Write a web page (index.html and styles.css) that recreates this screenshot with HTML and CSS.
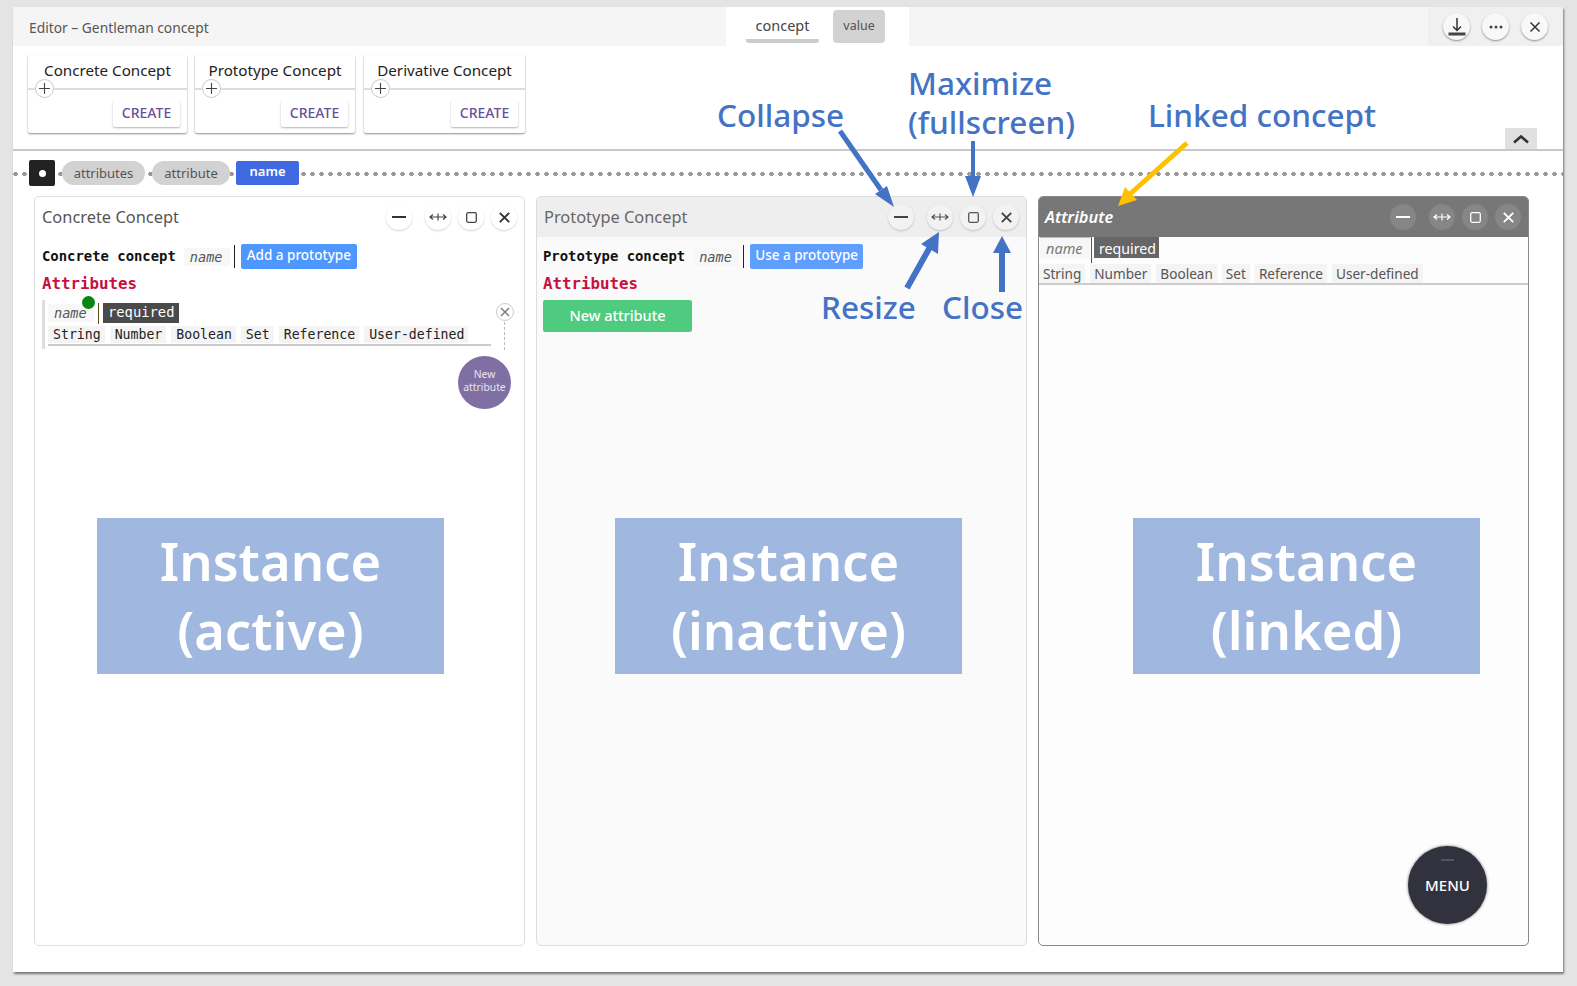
FILE: index.html

```html
<!DOCTYPE html>
<html lang="en">
<head>
  <meta charset="UTF-8">
  <title>Editor – Gentleman concept</title>
  <link rel="stylesheet" href="styles.css">
</head>
<body>

<div class="window">
  <header class="titlebar">
    <div class="title">Editor – Gentleman concept</div>
    <div class="tabs">
      <span class="tab tab-active">concept</span>
      <span class="tab tab-value">value</span>
    </div>
    <div class="win-actions">
      <button class="round"><svg width="20" height="22" viewBox="0 0 20 22"><path d="M10 2v12M6 10.500l4 4 4-4" fill="none" stroke="#333" stroke-width="1.500"/><rect x="1.500" y="16.500" width="17" height="3" fill="#444"/></svg></button>
      <button class="round"><svg width="14" height="4" viewBox="0 0 14 4"><circle cx="2" cy="2" r="1.500" fill="#444"/><circle cx="7" cy="2" r="1.500" fill="#444"/><circle cx="12" cy="2" r="1.500" fill="#444"/></svg></button>
      <button class="round"><svg width="12" height="12" viewBox="0 0 12 12"><path d="M1.500 1.500l9 9M10.500 1.500l-9 9" stroke="#333" stroke-width="1.500"/></svg></button>
    </div>
  </header>

  <section class="toolbar">
    <div class="card card-a">
      <div class="card-name">Concrete Concept</div>
      <span class="card-plus"><svg width="11" height="11" viewBox="0 0 11 11"><path d="M5.500 0v11M0 5.500h11" stroke="#444" stroke-width="1.100"/></svg></span>
      <div class="card-foot"><span class="create">CREATE</span></div>
    </div>
    <div class="card card-b">
      <div class="card-name">Prototype Concept</div>
      <span class="card-plus"><svg width="11" height="11" viewBox="0 0 11 11"><path d="M5.500 0v11M0 5.500h11" stroke="#444" stroke-width="1.100"/></svg></span>
      <div class="card-foot"><span class="create">CREATE</span></div>
    </div>
    <div class="card card-c">
      <div class="card-name">Derivative Concept</div>
      <span class="card-plus"><svg width="11" height="11" viewBox="0 0 11 11"><path d="M5.500 0v11M0 5.500h11" stroke="#444" stroke-width="1.100"/></svg></span>
      <div class="card-foot"><span class="create">CREATE</span></div>
    </div>
    <button class="fold"><svg width="18" height="10" viewBox="0 0 18 10"><path d="M2 8.500l7-6 7 6" fill="none" stroke="#333" stroke-width="2.600"/></svg></button>
  </section>

  <section class="workspace">
    <nav class="crumbs">
      <span class="crumb-root"><i></i></span>
      <span class="crumb">attributes</span>
      <span class="crumb crumb-b">attribute</span>
      <span class="crumb-current">name</span>
    </nav>

    <div class="panels">
      <article class="panel">
        <div class="panel-head">
          <h3>Concrete Concept</h3>
          <div class="panel-btns">
            <button class="round btn-min"><svg width="14" height="2" viewBox="0 0 14 2"><rect width="14" height="2" fill="#333"/></svg></button>
            <button class="round btn-resize"><svg width="18" height="10" viewBox="0 0 18 10"><path d="M1 5h16M4 2.500L1 5l3 2.500M14 2.500L17 5l-3 2.500M9 1.500v7" fill="none" stroke="#444" stroke-width="1.200"/></svg></button>
            <button class="round"><svg width="11" height="11" viewBox="0 0 11 11"><rect x=".7" y=".7" width="9.600" height="9.600" rx="1.500" fill="none" stroke="#444" stroke-width="1.300"/></svg></button>
            <button class="round"><svg width="11" height="11" viewBox="0 0 11 11"><path d="M.8.800l9.400 9.400M10.200.800L.8 10.200" stroke="#333" stroke-width="1.900"/></svg></button>
          </div>
        </div>
        <div class="panel-body">
          <div class="line">
            <b class="kw">Concrete concept</b>
            <span class="field">name</span>
            <span class="caret"></span>
            <span class="action">Add a prototype</span>
          </div>
          <div class="section-title">Attributes</div>
          <div class="attr">
            <div class="attr-top">
              <span class="field field-dot">name<i class="dot"></i></span>
              <span class="caret caret-sm"></span>
              <span class="req">required</span>
            </div>
            <div class="types">
              <span>String</span><span>Number</span><span>Boolean</span><span>Set</span><span>Reference</span><span>User-defined</span>
            </div>
            <span class="attr-x"><svg width="10" height="10" viewBox="0 0 10 10"><path d="M1 1l8 8M9 1l-8 8" stroke="#777" stroke-width="1.400"/></svg></span>
          </div>
          <div class="new-wrap"><span class="new-round">New attribute</span></div>
        </div>
      </article>

      <article class="panel panel-inactive">
        <div class="panel-head">
          <h3>Prototype Concept</h3>
          <div class="panel-btns">
            <button class="round btn-min"><svg width="14" height="2" viewBox="0 0 14 2"><rect width="14" height="2" fill="#444"/></svg></button>
            <button class="round btn-resize"><svg width="18" height="10" viewBox="0 0 18 10"><path d="M1 5h16M4 2.500L1 5l3 2.500M14 2.500L17 5l-3 2.500M9 1.500v7" fill="none" stroke="#555" stroke-width="1.200"/></svg></button>
            <button class="round"><svg width="11" height="11" viewBox="0 0 11 11"><rect x=".7" y=".7" width="9.600" height="9.600" rx="1.500" fill="none" stroke="#555" stroke-width="1.300"/></svg></button>
            <button class="round"><svg width="11" height="11" viewBox="0 0 11 11"><path d="M.8.800l9.400 9.400M10.200.800L.8 10.200" stroke="#444" stroke-width="1.900"/></svg></button>
          </div>
        </div>
        <div class="panel-body">
          <div class="line">
            <b class="kw">Prototype concept</b>
            <span class="field">name</span>
            <span class="caret"></span>
            <span class="action">Use a prototype</span>
          </div>
          <div class="section-title">Attributes</div>
          <span class="new-flat">New attribute</span>
        </div>
      </article>

      <article class="panel panel-linked">
        <div class="panel-head">
          <h3>Attribute</h3>
          <div class="panel-btns">
            <button class="round btn-min"><svg width="14" height="2" viewBox="0 0 14 2"><rect width="14" height="2" fill="#fff"/></svg></button>
            <button class="round btn-resize"><svg width="18" height="10" viewBox="0 0 18 10"><path d="M1 5h16M4 2.500L1 5l3 2.500M14 2.500L17 5l-3 2.500M9 1.500v7" fill="none" stroke="#fff" stroke-width="1.200"/></svg></button>
            <button class="round"><svg width="11" height="11" viewBox="0 0 11 11"><rect x=".7" y=".7" width="9.600" height="9.600" rx="1.500" fill="none" stroke="#fff" stroke-width="1.300"/></svg></button>
            <button class="round"><svg width="11" height="11" viewBox="0 0 11 11"><path d="M.8.800l9.400 9.400M10.200.800L.8 10.200" stroke="#fff" stroke-width="1.900"/></svg></button>
          </div>
        </div>
        <div class="linked-top">
          <span class="field">name</span>
          <span class="caret caret-sm"></span>
          <span class="req">required</span>
        </div>
        <div class="types types-sans">
          <span>String</span><span>Number</span><span>Boolean</span><span>Set</span><span>Reference</span><span>User-defined</span>
        </div>
      </article>
    </div>
  </section>

  <button class="menu-fab"><i></i>MENU</button>
</div>

<!-- notes drawn on top of the screenshot -->
<div class="note-layer">
  <div class="inst inst-a">Instance<br>(active)</div>
  <div class="inst inst-b">Instance<br>(inactive)</div>
  <div class="inst inst-c">Instance<br>(linked)</div>

  <div class="note note-collapse">Collapse</div>
  <div class="note note-max">Maximize<br>(fullscreen)</div>
  <div class="note note-linked">Linked concept</div>
  <div class="note note-resize">Resize</div>
  <div class="note note-close">Close</div>

  <svg class="arrows" width="1577" height="986" viewBox="0 0 1577 986">
    <path d="M840 131L881 190" stroke="#4472c4" stroke-width="5"/>
    <path d="M894 207L875 194 887 186z" fill="#4472c4"/>
    <path d="M973 141V178" stroke="#4472c4" stroke-width="4"/>
    <path d="M973 197L965 176h16z" fill="#4472c4"/>
    <path d="M1187 143L1130 194" stroke="#ffc000" stroke-width="5"/>
    <path d="M1118 206L1125 187 1137 200z" fill="#ffc000"/>
    <path d="M907 288L930 247" stroke="#4472c4" stroke-width="6"/>
    <path d="M939 232L938 254 921 244z" fill="#4472c4"/>
    <path d="M1002 292V252" stroke="#4472c4" stroke-width="6"/>
    <path d="M1002 236L1011 253h-18z" fill="#4472c4"/>
  </svg>
</div>

</body>
</html>
```

FILE: styles.css

```css
* {
  box-sizing: border-box;
}

body {
  margin: 0;
  height: 986px;
  padding: 7px 14px 14px 13px;
  background: #e4e4e4;
  color: #333;
  font-family: "Noto Sans", "Open Sans", sans-serif;
  overflow: hidden;
  position: relative;
}

button {
  font-family: inherit;
  border: none;
  padding: 0;
}

.window {
  position: relative;
  height: 965px;
  background: #fff;
  display: flex;
  flex-direction: column;
  box-shadow: 1px 2px 2px #777;
}

/* title bar */
.titlebar {
  height: 39px;
  flex: none;
  display: flex;
  background: #f5f5f5;
}

.title {
  width: 713px;
  padding: 11px 0 0 16px;
  font-size: 13.800px;
  color: #555;
}

.tabs {
  width: 183px;
  background: #fff;
  display: flex;
  align-items: flex-start;
  padding: 3px 0 0 20px;
  gap: 14px;
}

.tab {
  font-size: 14.500px;
  text-align: center;
}

.tab-active {
  width: 73px;
  height: 33px;
  padding-top: 5px;
  color: #444;
  border-bottom: 4px solid #ccc;
  border-radius: 0 0 3px 3px;
}

.tab-value {
  width: 52px;
  height: 33px;
  padding-top: 7px;
  font-size: 12.500px;
  color: #555;
  background: #d2d2d2;
  border-radius: 4px;
}

.win-actions {
  margin-left: auto;
  width: 135px;
  background: #f0f0f0;
  display: flex;
  gap: 12px;
  padding: 6px 0 0 15px;
}

.win-actions .round {
  width: 27px;
  height: 27px;
  background: #f8f8f8;
  box-shadow: 0 1px 2px rgba(0, 0, 0, .4);
}

.round {
  width: 26px;
  height: 26px;
  border-radius: 50%;
  background: #fff;
  box-shadow: 0 1px 2px rgba(0, 0, 0, .18);
  display: flex;
  align-items: center;
  justify-content: center;
}

/* concept cards */
.toolbar {
  position: relative;
  height: 105px;
  flex: none;
  padding: 9px 0 0 15px;
  display: flex;
  border-bottom: 2px solid #c8c8c8;
}

.card {
  position: relative;
  height: 78px;
  background: #fff;
  box-shadow: 0 1px 2px rgba(0, 0, 0, .45);
  border-radius: 2px;
}

.card-a { width: 159px; margin-right: 8px; }
.card-b { width: 160px; margin-right: 9px; }
.card-c { width: 161px; }

.card-name {
  height: 35px;
  border-bottom: 2px solid #ddd;
  text-align: center;
  font-size: 15.200px;
  line-height: 31px;
  color: #222;
  white-space: nowrap;
}

.card-plus {
  position: absolute;
  left: 7px;
  top: 24px;
  width: 19px;
  height: 19px;
  border-radius: 50%;
  background: #fff;
  border: 1px solid #ccc;
  display: flex;
  align-items: center;
  justify-content: center;
}

.card-foot {
  display: flex;
  justify-content: flex-end;
  padding: 10px 7px 0 0;
}

.create {
  width: 67px;
  height: 27px;
  background: #fff;
  box-shadow: 0 1px 2px rgba(0, 0, 0, .3);
  border-radius: 2px;
  color: #67519b;
  font-size: 14px;
  font-weight: 500;
  text-align: center;
  line-height: 25px;
}

.fold {
  position: absolute;
  right: 26px;
  bottom: 0;
  width: 32px;
  height: 21px;
  background: #e0e0e0;
  display: flex;
  align-items: center;
  justify-content: center;
}

/* breadcrumb */
.workspace {
  flex: 1;
  padding-top: 9px;
}

.crumbs {
  height: 26px;
  padding-left: 16px;
  display: flex;
  align-items: center;
  background-image: radial-gradient(circle, #999 2px, transparent 2.500px);
  background-size: 9px 8px;
  background-repeat: repeat-x;
  background-position: -2px 10px;
}

.crumb-root {
  width: 26px;
  height: 26px;
  background: #222;
  border-radius: 2px;
  display: flex;
  align-items: center;
  justify-content: center;
  margin-right: 7px;
}

.crumb-root i {
  width: 7px;
  height: 7px;
  border-radius: 50%;
  background: #fff;
}

.crumb {
  width: 83px;
  height: 24px;
  border-radius: 12px;
  background: #d2d2d2;
  color: #555;
  font-size: 13px;
  text-align: center;
  line-height: 24px;
  margin-right: 7px;
}

.crumb-b {
  width: 78px;
  margin-right: 6px;
}

.crumb-current {
  width: 63px;
  height: 24px;
  border-radius: 2px;
  background: #4169e1;
  color: #fff;
  font-size: 13px;
  font-weight: 600;
  text-align: center;
  line-height: 21px;
}

/* panels */
.panels {
  margin-top: 10px;
  padding-left: 21px;
  display: grid;
  grid-template-columns: repeat(3, 491px);
  column-gap: 11px;
  height: 750px;
}

.panel {
  border: 1px solid #ddd;
  border-radius: 5px;
  background: #fff;
  overflow: hidden;
}

.panel-head {
  height: 40px;
  display: flex;
  align-items: center;
  padding-left: 7px;
}

.panel-head h3 {
  margin: -2px 0 0;
  font-size: 16.400px;
  font-weight: 400;
  color: #555;
}

.panel-btns {
  margin-left: auto;
  padding-right: 7px;
  display: flex;
  gap: 7px;
}

.panel-btns .btn-min {
  margin-right: 6px;
}

.panel-body {
  padding: 7px 7px 0;
}

.line {
  height: 25px;
  display: flex;
  align-items: center;
}

.kw {
  margin-top: -2px;
  font-family: "DejaVu Sans Mono", monospace;
  font-size: 13.900px;
  font-weight: 700;
  color: #111;
  white-space: nowrap;
}

.field {
  background: #f7f7f7;
  color: #555;
  font-family: "DejaVu Sans Mono", monospace;
  font-style: italic;
  font-size: 13.600px;
  line-height: 18px;
  padding: 0 6px;
}

.line .field {
  margin-left: 8px;
  width: 46px;
}

.caret {
  width: 1px;
  height: 23px;
  background: #222;
  margin: 0 6px 0 4px;
}

.action {
  width: 116px;
  height: 25px;
  background: #4d97ff;
  color: #fff;
  border-radius: 2px;
  font-size: 13.500px;
  font-weight: 500;
  text-align: center;
  line-height: 23px;
  white-space: nowrap;
}

.section-title {
  margin-top: 3px;
  height: 27px;
  font-family: "DejaVu Sans Mono", monospace;
  font-size: 15.800px;
  font-weight: 700;
  line-height: 24px;
  color: #c7103f;
}

.attr {
  position: relative;
  width: 449px;
  height: 49px;
  margin-top: 1px;
  padding: 3px 0 0 3px;
  border-left: 3px solid #ddd;
}

.attr-top {
  display: flex;
  align-items: center;
  height: 20px;
}

.field-dot {
  position: relative;
  width: 46px;
}

.dot {
  position: absolute;
  right: -1px;
  top: -8px;
  width: 13px;
  height: 13px;
  border-radius: 50%;
  background: #0a850f;
}

.caret-sm {
  height: 21px;
  margin: 0 4px 0 4px;
  background: #5a4a20;
}

.req {
  background: #4a4a4a;
  color: #fff;
  font-family: "DejaVu Sans Mono", monospace;
  font-size: 13.800px;
  line-height: 19px;
  margin-top: -1px;
  padding: 0 5px 1px;
}

.types {
  display: flex;
  gap: 5px;
  margin-top: 3px;
  padding-bottom: 1px;
  border-bottom: 2px solid #ccc;
  font-family: "DejaVu Sans Mono", monospace;
  font-size: 13.200px;
  line-height: 17px;
  color: #222;
}

.types span {
  background: #f4f4f4;
  padding: 0 4px 0 5px;
}

.attr-x {
  position: absolute;
  right: -23px;
  top: 3px;
  width: 18px;
  height: 18px;
  border-radius: 50%;
  background: #fff;
  border: 1px solid #ccc;
  display: flex;
  align-items: center;
  justify-content: center;
}

.attr-x::after {
  content: "";
  position: absolute;
  left: 7px;
  top: 18px;
  height: 28px;
  border-left: 1px dashed #bbb;
}

.new-wrap {
  display: flex;
  justify-content: flex-end;
  padding: 7px 6px 0 0;
}

.new-round {
  width: 53px;
  height: 53px;
  padding-top: 12px;
  border-radius: 50%;
  background: #7f6fa3;
  color: #e8e4f0;
  font-size: 10.300px;
  line-height: 13px;
  text-align: center;
}

.new-flat {
  display: block;
  width: 149px;
  height: 32px;
  margin-top: 1px;
  background: #4fcb80;
  color: #fff;
  border-radius: 2px;
  font-size: 14.500px;
  font-weight: 500;
  text-align: center;
  line-height: 30px;
}

.panel-inactive {
  background: #fafafa;
}

.panel-inactive .panel-head {
  background: #eee;
}

.panel-inactive .panel-head h3 {
  color: #666;
}

.panel-inactive .panel-body {
  padding-left: 6px;
}

.panel-inactive .round {
  background: #f2f2f2;
}

.panel-inactive .action {
  width: 113px;
  background: #5d9eff;
}

.panel-linked {
  border-color: #888;
  background: #fdfdfd;
}

.panel-linked .panel-head {
  background: #777;
  padding-left: 6px;
}

.panel-linked h3 {
  color: #fff;
  font-style: italic;
  font-weight: 600;
}

.panel-linked .round {
  background: #868686;
  box-shadow: none;
}

.linked-top {
  display: flex;
  align-items: flex-start;
  height: 27px;
  padding-left: 1px;
}

.linked-top .field {
  width: 50px;
  height: 21px;
  font-family: "Noto Sans", sans-serif;
  font-size: 14.500px;
  line-height: 20px;
  border-top: 1px solid #bbb;
  color: #777;
}

.linked-top .caret {
  margin: 0 2px 0 1px;
  height: 26px;
  background: #555;
}

.linked-top .req {
  width: 65px;
  height: 21px;
  margin-top: 0;
  padding: 0 5px;
  font-family: "Noto Sans", sans-serif;
  font-size: 14.200px;
  line-height: 23px;
  background: #666;
}

.types-sans {
  margin-top: 0;
  padding: 0;
  height: 21px;
  font-family: "Noto Sans", sans-serif;
  font-size: 13.600px;
  line-height: 19px;
  color: #555;
}

.types-sans span {
  padding: 0 4px;
}

/* floating menu */
.menu-fab {
  position: absolute;
  left: 1395px;
  top: 839px;
  width: 79px;
  height: 78px;
  border-radius: 50%;
  background: #32323e;
  color: #fff;
  font-size: 15px;
  font-weight: 500;
  box-shadow: 0 0 3px rgba(0, 0, 0, .6);
}

.menu-fab i {
  position: absolute;
  left: 33px;
  top: 13px;
  width: 13px;
  height: 2px;
  background: #555562;
}

/* annotation overlay */
.note-layer {
  position: absolute;
  left: 0;
  top: 0;
  width: 1577px;
  height: 986px;
  pointer-events: none;
}

.arrows {
  position: absolute;
  left: 0;
  top: 0;
}

.inst {
  position: absolute;
  top: 518px;
  width: 347px;
  height: 156px;
  padding-top: 8px;
  background: #a0b8e0;
  color: #fff;
  font-size: 52.500px;
  font-weight: 600;
  line-height: 69px;
  text-align: center;
}

.inst-a { left: 97px; }
.inst-b { left: 615px; }
.inst-c { left: 1133px; }

.note {
  position: absolute;
  color: #4472c4;
  font-size: 31.500px;
  font-weight: 500;
  line-height: 39px;
  white-space: nowrap;
}

.note-collapse { left: 717px; top: 95px; }
.note-max { left: 908px; top: 63px; }
.note-linked { left: 1148px; top: 95px; }
.note-resize { left: 821px; top: 287px; }
.note-close { left: 942px; top: 287px; }
```
